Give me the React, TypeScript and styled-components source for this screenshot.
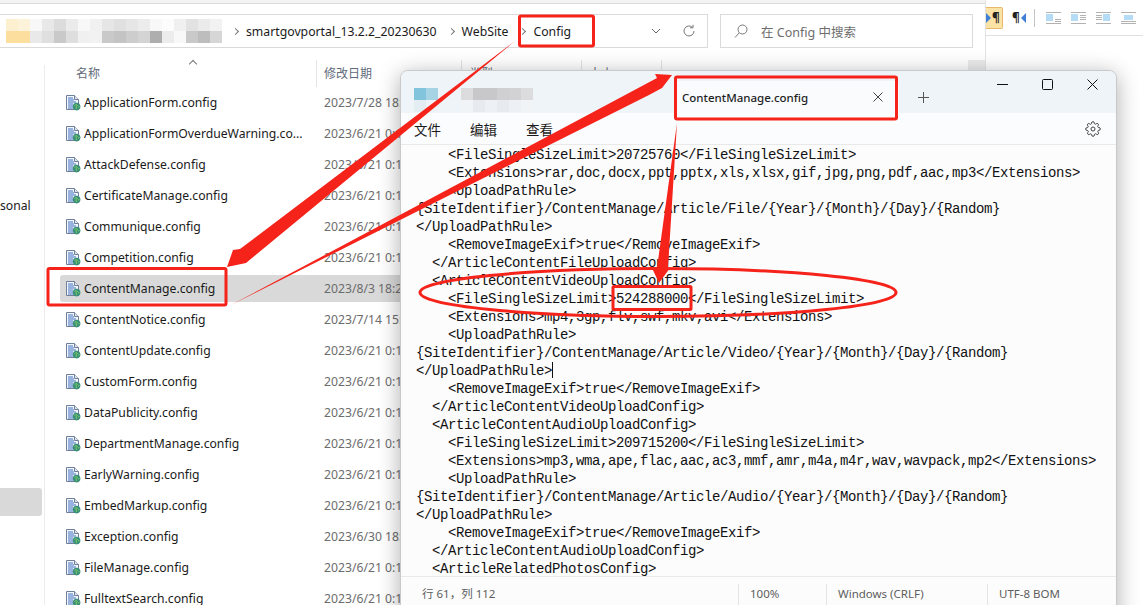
import { createGlobalStyle } from "styled-components";
import styled from "styled-components";

const UI_FONT = `"Noto Sans", "Noto Sans CJK SC", sans-serif`;
const RED = "#f5231a";

const GlobalStyle = createGlobalStyle`
  html, body {
    margin: 0;
    padding: 0;
    background: #fff;
    overflow: hidden;
  }
  * { box-sizing: border-box; }
`;

const Desktop = styled.div`
  position: relative;
  width: 1143px;
  height: 605px;
  overflow: hidden;
  display: flex;
  font-family: ${UI_FONT};
  background: #fff;
`;

/* explorer window */
const Explorer = styled.div`
  width: 986px;
  height: 605px;
  flex: none;
  display: flex;
  flex-direction: column;
  background: #fff;
  border-right: 1px solid #e3e3e3;
  border-top: 1px solid #f3f3f3;
`;

const TopStrip = styled.div`
  height: 3px;
  background: #f3f3f3;
  border-bottom: 1px solid #dcdcdc;
  flex: none;
`;

const AddressRow = styled.div`
  height: 34px;
  margin-top: 10px;
  flex: none;
  display: flex;
  gap: 12px;
`;

const AddressBar = styled.div`
  width: 708px;
  border: 1px solid #dadada;
  border-left: none;
  display: flex;
  align-items: center;
  position: relative;
  font-size: 12.25px;
  color: #1a1a1a;
`;

const PathBlur = styled.div`
  margin: 0 11px 0 6px;
  flex: none;
`;

const Crumb = styled.span`
  margin-right: 12px;
  white-space: nowrap;
`;

const Sep = styled.span`
  width: 5px;
  height: 5px;
  margin-right: 8px;
  border-top: 1px solid #777;
  border-right: 1px solid #777;
  transform: rotate(45deg);
  flex: none;
`;

const AddressTools = styled.div`
  margin-left: auto;
  display: flex;
  align-items: center;
  gap: 21px;
  padding-right: 11px;
`;

const SearchBox = styled.div`
  width: 253px;
  border: 1px solid #dadada;
  display: flex;
  align-items: center;
  gap: 13px;
  padding-left: 13px;
  font-size: 12.5px;
  color: #6d6d6d;
`;

const Body = styled.div`
  flex: 1;
  display: flex;
  min-height: 0;
`;

const Sidebar = styled.div`
  width: 45px;
  flex: none;
  border-right: 1px solid #ececec;
  margin-top: 17px;
  font-size: 12.2px;
  color: #1a1a1a;
  overflow: hidden;
`;

const SidebarLabel = styled.div`
  margin-top: 132px;
  height: 18px;
  line-height: 18px;
  white-space: nowrap;
`;

const SidebarSelected = styled.div`
  margin-top: 273px;
  width: 42px;
  height: 28px;
  background: #d9d9d9;
  border-radius: 0 3px 3px 0;
`;

const FileArea = styled.div`
  flex: 1;
  min-width: 0;
  position: relative;
`;

const HeaderRow = styled.div`
  height: 27px;
  margin-top: 12px;
  display: flex;
  font-size: 12px;
  color: #5f6b7a;
`;

const HeaderCell = styled.div<{ $w: number; $pad: number }>`
  width: ${({ $w }) => $w}px;
  padding-left: ${({ $pad }) => $pad}px;
  border-right: 1px solid #e5e5e5;
  position: relative;
  line-height: 28px;
  flex: none;
`;

const SortCaret = styled.span`
  position: absolute;
  left: 145px;
  top: 1px;
  width: 6px;
  height: 6px;
  border-top: 1px solid #777;
  border-left: 1px solid #777;
  transform: rotate(45deg);
`;

const ScrollStub = styled.div`
  position: absolute;
  right: 0;
  top: 12px;
  width: 17px;
  height: 12px;
  background: #ececec;
`;

const FileList = styled.div`
  display: flex;
  flex-direction: column;
  gap: 4px;
  padding-left: 15px;
  margin-top: 2px;
`;

const FileRow = styled.div<{ $selected?: boolean }>`
  height: 27px;
  display: flex;
  align-items: center;
  padding-left: 5px;
  border-radius: 3px 0 0 3px;
  background: ${({ $selected }) => ($selected ? "#d9d9d9" : "transparent")};
  white-space: nowrap;
`;

const FileName = styled.span`
  width: 240px;
  margin-left: 3px;
  font-size: 12.2px;
  color: #1a1a1a;
  flex: none;
`;

const FileDate = styled.span`
  font-size: 12.2px;
  color: #6c6c6c;
`;

/* right strip of the window behind */
const WordToolbar = styled.div`
  flex: 1;
  height: 36px;
  border-bottom: 1px solid #dfdfdf;
  display: flex;
  align-items: center;
  background: #fff;
`;

const ToggleBtn = styled.div`
  width: 17px;
  height: 22px;
  background: #fbe3a6;
  border: 1px solid #e6b96c;
  border-left: none;
  border-radius: 0 2px 2px 0;
  display: flex;
  align-items: center;
  gap: 1px;
  font-size: 12px;
  font-weight: 700;
  color: #222;
`;

const PilcrowBtn = styled.div`
  margin-left: 9px;
  display: flex;
  align-items: center;
  gap: 1px;
  font-size: 12px;
  font-weight: 700;
  color: #222;
`;

const ToolDivider = styled.div`
  width: 1px;
  height: 18px;
  margin: 0 11px 0 8px;
  background: #c4c4c4;
`;

const AlignIcons = styled.div`
  display: flex;
  gap: 10px;
`;

/* notepad window */
const Notepad = styled.div`
  position: absolute;
  left: 400px;
  top: 70px;
  width: 717px;
  height: 560px;
  background: #fcfcfd;
  border: 1px solid #c9c9c9;
  border-radius: 8px 8px 0 0;
  box-shadow: 0 4px 22px rgba(0, 0, 0, 0.32);
  display: flex;
  flex-direction: column;
  overflow: hidden;
`;

const TitleBar = styled.div`
  height: 42px;
  flex: none;
  background: #eff4f9;
  display: flex;
  align-items: flex-end;
  position: relative;
`;

const TitleBlur = styled.div`
  width: 274px;
  height: 42px;
  padding: 17px 0 0 13px;
  flex: none;
  display: flex;
  gap: 23px;
`;

const Tab = styled.div`
  width: 224px;
  height: 32px;
  background: #f9fbfd;
  border-radius: 5px 5px 0 0;
  display: flex;
  align-items: center;
  justify-content: space-between;
  padding: 0 16px 0 7px;
  font-size: 11.5px;
  font-weight: 500;
  color: #1f1f1f;
`;

const NewTab = styled.div`
  width: 48px;
  height: 32px;
  display: flex;
  align-items: center;
  justify-content: center;
`;

const WindowButtons = styled.div`
  position: absolute;
  top: 8px;
  right: 18px;
  display: flex;
  gap: 34px;
  align-items: center;
`;

const MenuRow = styled.div`
  height: 32px;
  flex: none;
  display: flex;
  align-items: center;
  padding: 0 15px 0 13px;
  gap: 29px;
  font-size: 13.5px;
  color: #1a1a1a;
  border-bottom: 1px solid #e9e9e9;
  background: #fbfcfd;
`;

const MenuSpacer = styled.div`
  flex: 1;
`;

const Editor = styled.pre`
  margin: 0;
  height: 432px;
  flex: none;
  overflow: hidden;
  padding: 1px 0 0 15px;
  font-family: "Liberation Mono", monospace;
  font-size: 14px;
  letter-spacing: -0.4px;
  line-height: 18px;
  color: #111;
  border-bottom: 1px solid #e9e9e9;
`;

const Caret = styled.span`
  display: inline-block;
  width: 1px;
  height: 16px;
  background: #111;
  vertical-align: -3px;
`;

const StatusBar = styled.div`
  height: 34px;
  display: flex;
  font-size: 11.5px;
  color: #5e5e5e;
  padding-top: 7px;
`;

const StatusCell = styled.div<{ $w: number; $pad: number; $line?: boolean }>`
  width: ${({ $w }) => $w}px;
  height: 21px;
  line-height: 19px;
  padding-left: ${({ $pad }) => $pad}px;
  border-left: ${({ $line }) => ($line ? "1px solid #e4e4e4" : "none")};
  white-space: nowrap;
  flex: none;
`;

/* hand drawn red marks over everything */
const Marks = styled.svg`
  position: absolute;
  left: 0;
  top: 0;
  pointer-events: none;
`;

const FileIcon = () => (
  <svg width="16" height="16" viewBox="0 0 16 16" style={{ flex: "none" }}>
    <path d="M1.500 .5h8l4 4v10h-12z" fill="#f4f7fb" stroke="#6f7f99" />
    <path d="M9.500 .5v4h4" fill="#dfe6ef" stroke="#6f7f99" />
    <path d="M3 3h5M3 5h6M3 7h8M3 9h5M3 11h5M3 13h5" stroke="#3f6fc4" strokeWidth="1" />
    <circle cx="11.600" cy="11.600" r="3.800" fill="#3a8f7a" />
    <path d="M9.500 10.500l2-1 1 1-1.500 1 .5 2.500M13 12l1.500-.5" stroke="#7fce62" fill="none" />
  </svg>
);

const Mosaic = ({ cells, size, w, h }: { cells: [number, number, string][]; size: number; w: number; h: number }) => (
  <svg width={w} height={h} style={{ display: "block", flex: "none" }}>
    {cells.map(([x, y, c], i) => (
      <rect key={i} x={x * size} y={y * size} width={size} height={size} fill={c} />
    ))}
  </svg>
);

const pathCells: [number, number, string][] = [
  [0, 0, "#fdf0d0"], [1, 0, "#fdf3da"], [2, 0, "#f8f8f8"], [3, 0, "#e8e8e8"], [4, 0, "#dcdcdc"], [5, 0, "#ebebeb"], [6, 0, "#f8f8f8"],
  [7, 0, "#f1f1f1"], [8, 0, "#e6e6e6"], [9, 0, "#e0e0e0"], [10, 0, "#e6e6e6"], [11, 0, "#ececec"], [12, 0, "#f8f8f8"], [13, 0, "#fcfcfc"], [14, 0, "#f0f0f0"], [15, 0, "#e2e2e2"], [16, 0, "#ebebeb"], [17, 0, "#f2f2f2"],
  [0, 1, "#fcdf9e"], [1, 1, "#fcdf9e"], [2, 1, "#e9e9e9"], [3, 1, "#dfdfdf"], [4, 1, "#c9c9c9"], [5, 1, "#dedede"], [6, 1, "#f0f0f0"],
  [7, 1, "#f2f2f2"], [8, 1, "#c9c9c9"], [9, 1, "#c4c4c4"], [10, 1, "#cdcdcd"], [11, 1, "#d4d4d4"], [12, 1, "#aeaeae"], [13, 1, "#ececec"], [14, 1, "#f8f8f8"], [15, 1, "#c9c9c9"], [16, 1, "#bdbdbd"], [17, 1, "#d6d6d6"],
];

const iconCells: [number, number, string][] = [
  [0, 0, "#82c4dc"], [1, 0, "#a6d4e4"], [0, 1, "#e4edf2"], [1, 1, "#eef3f7"],
];

const titleCells: [number, number, string][] = [
  [0, 0, "#dcdcde"], [1, 0, "#c8c8ca"], [2, 0, "#c8c8ca"], [3, 0, "#d0d0d2"], [4, 0, "#d2d2d4"], [5, 0, "#dcdcde"],
  [0, 1, "#f1f4f7"], [1, 1, "#e7ebef"], [2, 1, "#edf0f4"], [3, 1, "#e7ebef"], [4, 1, "#edf0f4"], [5, 1, "#f1f4f7"],
];

const files: [string, string, boolean?][] = [
  ["ApplicationForm.config", "2023/7/28 18:21"],
  ["ApplicationFormOverdueWarning.co...", "2023/6/21 0:17"],
  ["AttackDefense.config", "2023/6/21 0:17"],
  ["CertificateManage.config", "2023/6/21 0:17"],
  ["Communique.config", "2023/6/21 0:17"],
  ["Competition.config", "2023/6/21 0:17"],
  ["ContentManage.config", "2023/8/3 18:22", true],
  ["ContentNotice.config", "2023/7/14 15:02"],
  ["ContentUpdate.config", "2023/6/21 0:17"],
  ["CustomForm.config", "2023/6/21 0:17"],
  ["DataPublicity.config", "2023/6/21 0:17"],
  ["DepartmentManage.config", "2023/6/21 0:17"],
  ["EarlyWarning.config", "2023/6/21 0:17"],
  ["EmbedMarkup.config", "2023/6/21 0:17"],
  ["Exception.config", "2023/6/30 18:21"],
  ["FileManage.config", "2023/6/21 0:17"],
  ["FulltextSearch.config", "2023/6/21 0:17"],
];

const editorTop = `    <FileSingleSizeLimit>20725760</FileSingleSizeLimit>
    <Extensions>rar,doc,docx,ppt,pptx,xls,xlsx,gif,jpg,png,pdf,aac,mp3</Extensions>
    <UploadPathRule>
{SiteIdentifier}/ContentManage/Article/File/{Year}/{Month}/{Day}/{Random}
</UploadPathRule>
    <RemoveImageExif>true</RemoveImageExif>
  </ArticleContentFileUploadConfig>
  <ArticleContentVideoUploadConfig>
    <FileSingleSizeLimit>524288000</FileSingleSizeLimit>
    <Extensions>mp4,3gp,flv,swf,mkv,avi</Extensions>
    <UploadPathRule>
{SiteIdentifier}/ContentManage/Article/Video/{Year}/{Month}/{Day}/{Random}
</UploadPathRule>`;

const editorBottom = `
    <RemoveImageExif>true</RemoveImageExif>
  </ArticleContentVideoUploadConfig>
  <ArticleContentAudioUploadConfig>
    <FileSingleSizeLimit>209715200</FileSingleSizeLimit>
    <Extensions>mp3,wma,ape,flac,aac,ac3,mmf,amr,m4a,m4r,wav,wavpack,mp2</Extensions>
    <UploadPathRule>
{SiteIdentifier}/ContentManage/Article/Audio/{Year}/{Month}/{Day}/{Random}
</UploadPathRule>
    <RemoveImageExif>true</RemoveImageExif>
  </ArticleContentAudioUploadConfig>
  <ArticleRelatedPhotosConfig>`;

const alignLayouts = [
  { pic: [0, 2, 7, 7], lines: "M0 .5h15M9 7.500h6M9 9.500h6M0 11.500h15" },
  { pic: [0, 2, 7, 7], lines: "M0 .5h15M9 3.500h6M9 5.500h6M9 7.500h6M0 11.500h15" },
  { pic: [7, 2, 7, 7], lines: "M0 .5h15M0 3.500h6M0 5.500h6M0 7.500h6M0 11.500h15" },
  { pic: [3, 3, 9, 5], lines: "M0 .5h15M0 9.500h15M0 11.500h15" },
];

const AlignIcon = ({ variant }: { variant: number }) => {
  const { pic, lines } = alignLayouts[variant];
  return (
    <svg width="15" height="12" viewBox="0 0 15 12">
      <rect x={pic[0]} y={pic[1]} width={pic[2]} height={pic[3]} fill="#b4dcf6" />
      <path d={lines} stroke="#b2b2b2" />
    </svg>
  );
};

export default function App() {
  return (
    <>
      <GlobalStyle />
      <Desktop>
        <Explorer>
          <TopStrip />
          <AddressRow>
            <AddressBar>
              <PathBlur>
                <Mosaic cells={pathCells} size={12} w={216} h={24} />
              </PathBlur>
              <Sep />
              <Crumb>smartgovportal_13.2.2_20230630</Crumb>
              <Sep />
              <Crumb>WebSite</Crumb>
              <Sep />
              <Crumb>Config</Crumb>
              <AddressTools>
                <svg width="10" height="6" viewBox="0 0 10 6">
                  <path d="M1 1l4 4 4-4" fill="none" stroke="#666" />
                </svg>
                <svg width="14" height="14" viewBox="0 0 14 14">
                  <path d="M12 7a5 5 0 1 1-1.600-3.700M11 .8v3h-3" fill="none" stroke="#777" />
                </svg>
              </AddressTools>
            </AddressBar>
            <SearchBox>
              <svg width="14" height="14" viewBox="0 0 14 14">
                <circle cx="8.500" cy="5.500" r="4.500" fill="none" stroke="#777" />
                <path d="M5.200 8.800l-4.200 4.700" stroke="#777" />
              </svg>
              在 Config 中搜索
            </SearchBox>
          </AddressRow>
          <Body>
            <Sidebar>
              <SidebarLabel>sonal</SidebarLabel>
              <SidebarSelected />
            </Sidebar>
            <FileArea>
              <ScrollStub />
              <HeaderRow>
                <HeaderCell $w={272} $pad={31}>
                  名称
                  <SortCaret />
                </HeaderCell>
                <HeaderCell $w={145} $pad={7}>修改日期</HeaderCell>
                <HeaderCell $w={120} $pad={7}>类型</HeaderCell>
                <HeaderCell $w={80} $pad={7}>大小</HeaderCell>
              </HeaderRow>
              <FileList>
                {files.map(([name, date, selected]) => (
                  <FileRow key={name} $selected={selected}>
                    <FileIcon />
                    <FileName>{name}</FileName>
                    <FileDate>{date}</FileDate>
                  </FileRow>
                ))}
              </FileList>
            </FileArea>
          </Body>
        </Explorer>

        <WordToolbar>
          <ToggleBtn>
            <svg width="5" height="10" viewBox="0 0 5 10">
              <path d="M0 0v10l5-5z" fill="#3f7fd6" />
            </svg>
            ¶
          </ToggleBtn>
          <PilcrowBtn>
            ¶
            <svg width="5" height="10" viewBox="0 0 5 10">
              <path d="M5 0v10L0 5z" fill="#3f7fd6" />
            </svg>
          </PilcrowBtn>
          <ToolDivider />
          <AlignIcons>
            <AlignIcon variant={0} />
            <AlignIcon variant={1} />
            <AlignIcon variant={2} />
            <AlignIcon variant={3} />
          </AlignIcons>
        </WordToolbar>

        <Notepad>
          <TitleBar>
            <TitleBlur>
              <Mosaic cells={iconCells} size={12} w={24} h={24} />
              <Mosaic cells={titleCells} size={12} w={72} h={24} />
            </TitleBlur>
            <Tab>
              ContentManage.config
              <svg width="10" height="10" viewBox="0 0 10 10">
                <path d="M.5.5l9 9M9.500 .5l-9 9" stroke="#444" />
              </svg>
            </Tab>
            <NewTab>
              <svg width="11" height="11" viewBox="0 0 11 11">
                <path d="M5.500 0v11M0 5.500h11" stroke="#555" />
              </svg>
            </NewTab>
            <WindowButtons>
              <svg width="11" height="11" viewBox="0 0 11 11">
                <path d="M0 5.500h11" stroke="#111" />
              </svg>
              <svg width="11" height="11" viewBox="0 0 11 11">
                <rect x=".5" y=".5" width="10" height="10" rx="1" fill="none" stroke="#111" />
              </svg>
              <svg width="11" height="11" viewBox="0 0 11 11">
                <path d="M.5.5l10 10M10.500 .5l-10 10" stroke="#111" />
              </svg>
            </WindowButtons>
          </TitleBar>
          <MenuRow>
            <span>文件</span>
            <span>编辑</span>
            <span>查看</span>
            <MenuSpacer />
            <svg width="16" height="16" viewBox="0 0 24 24" fill="none" stroke="#444" strokeWidth="1.500">
              <circle cx="12" cy="12" r="3" />
              <path d="M19.400 15a1.650 1.650 0 0 0 .33 1.820l.06.06a2 2 0 1 1-2.830 2.830l-.06-.06a1.650 1.650 0 0 0-2.820 1.170V21a2 2 0 1 1-4 0v-.09A1.650 1.650 0 0 0 7.270 19.740l-.06.06a2 2 0 1 1-2.830-2.830l.06-.06a1.650 1.650 0 0 0-1.170-2.820H3a2 2 0 1 1 0-4h.09A1.650 1.650 0 0 0 4.260 7.270l-.06-.06a2 2 0 1 1 2.830-2.830l.06.06A1.650 1.650 0 0 0 9.910 3.270V3a2 2 0 1 1 4 0v.09a1.650 1.650 0 0 0 2.820 1.170l.06-.06a2 2 0 1 1 2.830 2.830l-.06.06a1.650 1.650 0 0 0 1.170 2.820H21a2 2 0 1 1 0 4h-.09a1.650 1.650 0 0 0-1.510 1.090z" />
            </svg>
          </MenuRow>
          <Editor>
            {editorTop}
            <Caret />
            {editorBottom}
          </Editor>
          <StatusBar>
            <StatusCell $w={337} $pad={21}>行 61，列 112</StatusCell>
            <StatusCell $w={88} $pad={11} $line>100%</StatusCell>
            <StatusCell $w={161} $pad={11} $line>Windows (CRLF)</StatusCell>
            <StatusCell $w={129} $pad={11} $line>UTF-8 BOM</StatusCell>
          </StatusBar>
        </Notepad>

        <Marks width="1143" height="605" viewBox="0 0 1143 605">
          <g fill="none" stroke={RED} strokeWidth="3" strokeLinejoin="round">
            <rect x="519.500" y="16" width="74" height="30" rx="1.500" />
            <rect x="675.500" y="77" width="221" height="42" rx="1.500" />
            <rect x="48" y="268.500" width="178" height="36.500" rx="1.500" />
            <rect x="613" y="286.500" width="78" height="23" rx="1" />
          </g>
          <ellipse cx="658" cy="292.500" rx="238" ry="24" fill="none" stroke={RED} strokeWidth="3" />
          <polygon points="515,41 252,258 246,263 227,267 233,250 240,249" fill={RED} />
          <polygon points="231,305 649,95 662,88 672,75 655,74 657,78" fill={RED} />
          <polygon points="677,123 668,268 670,268 659,283 652,268 657,268" fill={RED} />
        </Marks>
      </Desktop>
    </>
  );
}
